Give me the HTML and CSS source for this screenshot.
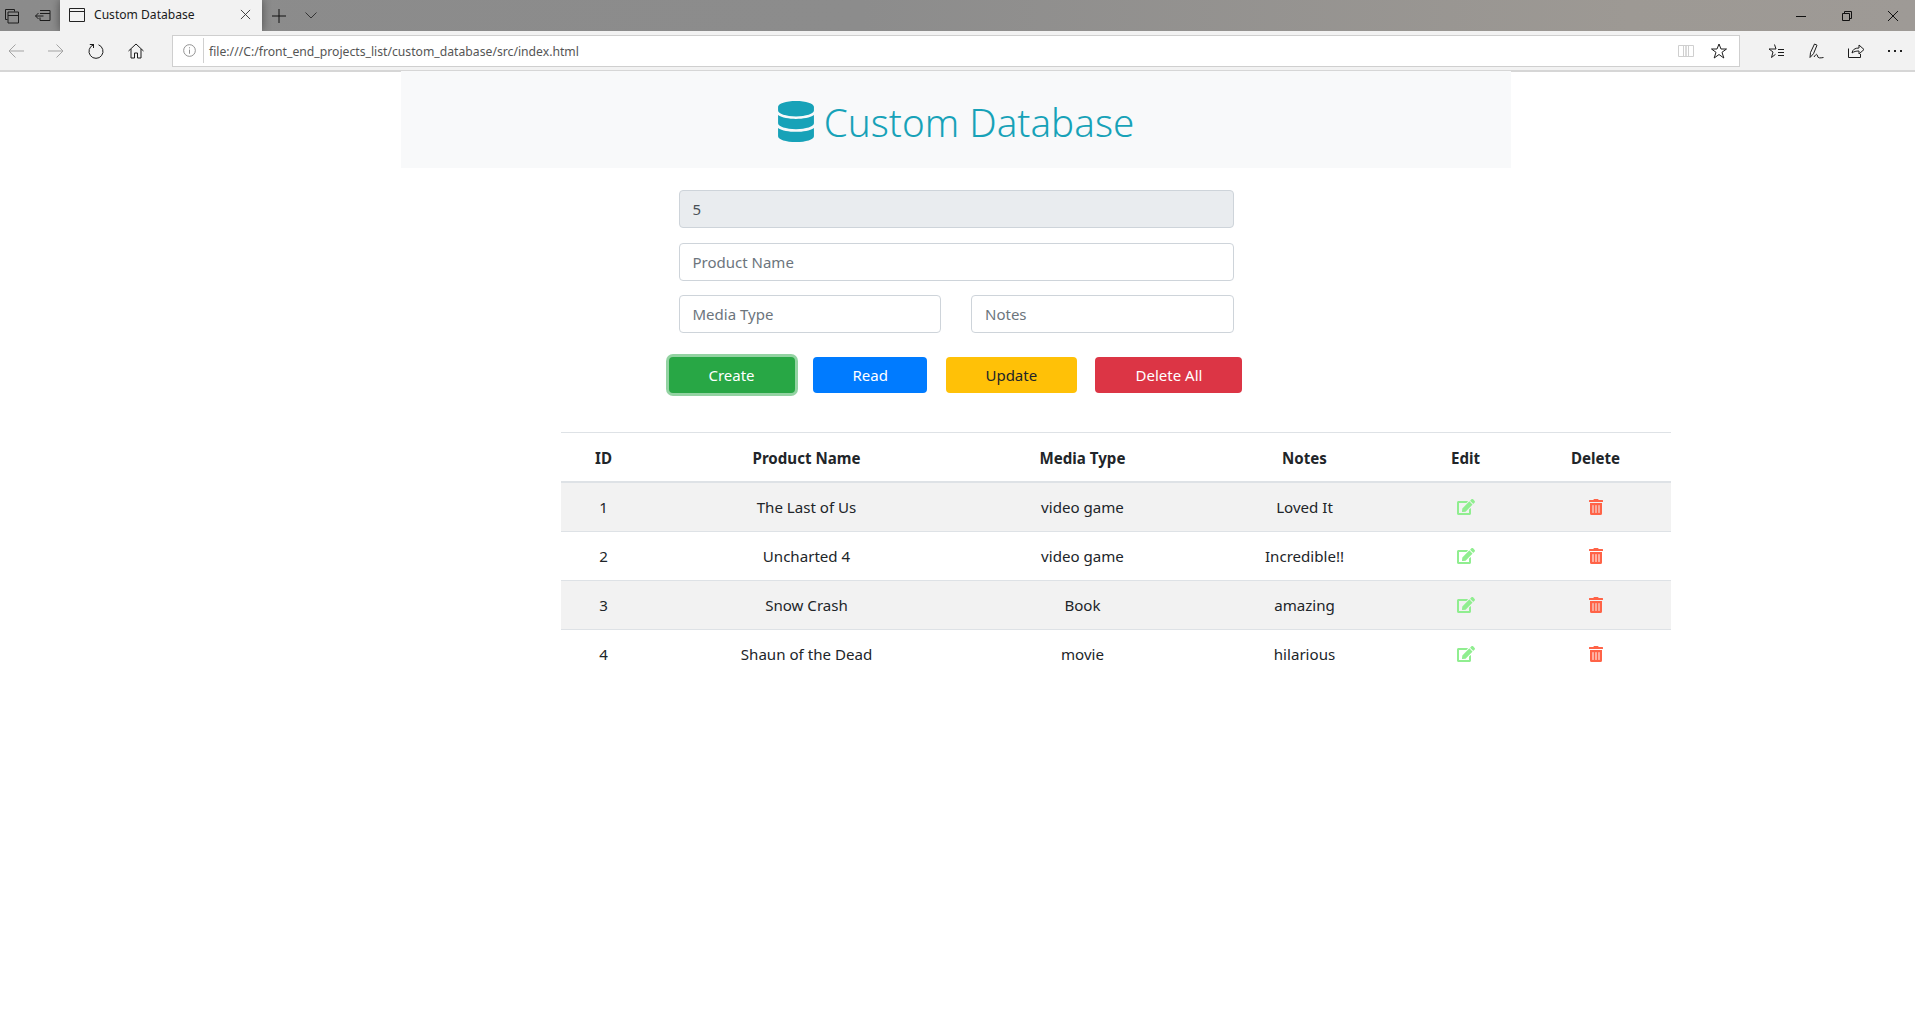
FILE: index.html
```html
<!DOCTYPE html>
<html lang="en">
<head>
<meta charset="utf-8">
<title>Custom Database</title>
<link rel="stylesheet" href="styles.css">
</head>
<body>
<header class="browser">
  <div class="titlebar">
    <div class="tab-tools">
      <svg class="ic" viewBox="0 0 16 16"><path d="M1.500 1.500h9v2M1.500 1.500v10h2M4 4h10.500v11H4zM4 7.500h10.500"/></svg>
      <svg class="ic ic-dark" viewBox="0 0 16 16"><path d="M5 2.500h10v10H5v-3M15 5.500H5M0.500 8h8M3.500 5l-3 3 3 3"/></svg>
    </div>
    <div class="tab">
      <svg class="tab-page" viewBox="0 0 16 14"><path d="M.5.500h15v13H.5zM.5 3.500h15"/></svg>
      <span class="tab-title">Custom Database</span>
      <svg class="tab-close" viewBox="0 0 12 12"><path d="M1 1l10 10M11 1L1 11"/></svg>
    </div>
    <svg class="new-tab" viewBox="0 0 14 14"><path d="M7 0v14M0 7h14"/></svg>
    <svg class="tab-list" viewBox="0 0 12 7"><path d="M.5.500L6 6l5.500-5.500"/></svg>
    <div class="win-controls">
      <svg class="win" viewBox="0 0 10 10"><path d="M0 5.500h10"/></svg>
      <svg class="win" viewBox="0 0 10 10"><path d="M.5 2.500h7v7h-7zM2.500 2.500v-2h7v7h-2"/></svg>
      <svg class="win" viewBox="0 0 10 10"><path d="M0 0l10 10M10 0L0 10"/></svg>
    </div>
  </div>
  <div class="toolbar">
    <div class="nav">
      <svg class="ic ic-off" viewBox="0 0 16 16"><path d="M16 8H1M7.500 1.500L1 8l6.500 6.500"/></svg>
      <svg class="ic ic-off" viewBox="0 0 16 16"><path d="M0 8h15M8.500 1.500L15 8l-6.500 6.500"/></svg>
      <svg class="ic" viewBox="0 0 16 16"><path d="M5.500 1.800a7 7 0 1 0 5 0M5.500 1v4M1.800 1.500H5.500"/></svg>
      <svg class="ic" viewBox="0 0 16 16"><path d="M.5 8L8 1l7.500 7M3 6v9h3.500v-5h3v5H13V6"/></svg>
    </div>
    <div class="address">
      <svg class="info" viewBox="0 0 14 14"><circle cx="7" cy="7" r="6.300"/><path d="M7 6v4.500M7 3.500v1.200"/></svg>
      <span class="url">file:///C:/front_end_projects_list/custom_database/src/index.html</span>
      <svg class="ic ic-faint" viewBox="0 0 16 16"><path d="M.5 2.500h7.500v11H.5zM8 2.500h7.500v11H8zM5.500 2.500v11M10.500 2.500v11"/></svg>
      <svg class="ic ic-star" viewBox="0 0 16 16"><path d="M8 1l2 5h5.500l-4.500 3.300 1.800 5.700L8 11.500 3.200 15 5 9.300.5 6H6z"/></svg>
    </div>
    <div class="actions">
      <svg class="ic" viewBox="0 0 16 16"><path d="M6.500 1.500L8 6H1l4 3-1.500 5.500 4-3.200M10 6.500h6M10 9.500h6M10 12.500h6"/></svg>
      <svg class="ic" viewBox="0 0 16 16"><path d="M2 14.500l.5-5L6.500 1l2.500 1.200-3.500 8.500-3.500 3.800zM6 14c2-3 3-3.500 3.500-1s2.500 2 6 1.500"/></svg>
      <svg class="ic" viewBox="0 0 16 16"><path d="M.5 5.500v9h12V11M4 10c.5-3.500 3-5 7-5V2l5 4.500-5 4.500V8c-3 0-5 .5-7 2z"/></svg>
      <div class="dots"><i></i><i></i><i></i></div>
    </div>
  </div>
</header>

<main class="page">
  <section class="jumbo">
    <svg class="db-icon" viewBox="0 0 448 512"><path d="M448 73.143v45.714C448 159.143 347.667 192 224 192S0 159.143 0 118.857V73.143C0 32.857 100.333 0 224 0s224 32.857 224 73.143zM448 176v102.857C448 319.143 347.667 352 224 352S0 319.143 0 278.857V176c48.125 33.143 136.208 48.572 224 48.572S399.874 209.143 448 176zm0 160v102.857C448 479.143 347.667 512 224 512S0 479.143 0 438.857V336c48.125 33.143 136.208 48.572 224 48.572S399.874 369.143 448 336z"/></svg>
    <h1 class="jumbo-title">Custom Database</h1>
  </section>

  <form class="entry">
    <input class="field field-locked" type="text" value="5" readonly>
    <input class="field" type="text" placeholder="Product Name">
    <div class="field-pair">
      <input class="field" type="text" placeholder="Media Type">
      <input class="field" type="text" placeholder="Notes">
    </div>
    <div class="buttons">
      <button class="btn btn-create" type="button">Create</button>
      <button class="btn btn-read" type="button">Read</button>
      <button class="btn btn-update" type="button">Update</button>
      <button class="btn btn-delete" type="button">Delete All</button>
    </div>
  </form>

  <table class="records">
    <colgroup>
      <col class="c-id"><col class="c-name"><col class="c-media"><col class="c-notes"><col class="c-edit"><col class="c-del">
    </colgroup>
    <thead>
      <tr><th>ID</th><th>Product Name</th><th>Media Type</th><th>Notes</th><th>Edit</th><th>Delete</th></tr>
    </thead>
    <tbody>
      <tr><td>1</td><td>The Last of Us</td><td>video game</td><td>Loved It</td>
        <td><svg class="edit" viewBox="0 0 576 512"><use href="#edit-shape"/></svg></td>
        <td><svg class="trash" viewBox="0 0 448 512"><use href="#trash-shape"/></svg></td></tr>
      <tr><td>2</td><td>Uncharted 4</td><td>video game</td><td>Incredible!!</td>
        <td><svg class="edit" viewBox="0 0 576 512"><use href="#edit-shape"/></svg></td>
        <td><svg class="trash" viewBox="0 0 448 512"><use href="#trash-shape"/></svg></td></tr>
      <tr><td>3</td><td>Snow Crash</td><td>Book</td><td>amazing</td>
        <td><svg class="edit" viewBox="0 0 576 512"><use href="#edit-shape"/></svg></td>
        <td><svg class="trash" viewBox="0 0 448 512"><use href="#trash-shape"/></svg></td></tr>
      <tr><td>4</td><td>Shaun of the Dead</td><td>movie</td><td>hilarious</td>
        <td><svg class="edit" viewBox="0 0 576 512"><use href="#edit-shape"/></svg></td>
        <td><svg class="trash" viewBox="0 0 448 512"><use href="#trash-shape"/></svg></td></tr>
    </tbody>
  </table>
</main>

<svg class="defs" aria-hidden="true">
  <defs>
    <path id="edit-shape" d="M402.600 83.200l90.200 90.200c3.800 3.800 3.800 10 0 13.800L274.400 405.600l-92.800 10.300c-12.400 1.400-22.900-9.100-21.500-21.500l10.300-92.800L388.800 83.200c3.800-3.800 10-3.800 13.800 0zm162-22.900l-48.800-48.800c-15.200-15.200-39.900-15.200-55.200 0l-35.400 35.400c-3.800 3.800-3.800 10 0 13.800l90.200 90.200c3.800 3.800 10 3.800 13.800 0l35.400-35.400c15.200-15.300 15.200-40 0-55.200zM384 346.200V448H64V128h229.800c3.200 0 6.200-1.300 8.500-3.500l40-40c7.600-7.600 2.200-20.500-8.500-20.500H48C21.500 64 0 85.500 0 112v352c0 26.500 21.500 48 48 48h352c26.500 0 48-21.500 48-48V306.200c0-10.700-12.900-16-20.500-8.500l-40 40c-2.200 2.300-3.500 5.300-3.500 8.500z"/>
    <path id="trash-shape" d="M32 464a48 48 0 0 0 48 48h288a48 48 0 0 0 48-48V128H32zm272-256a16 16 0 0 1 32 0v224a16 16 0 0 1-32 0zm-96 0a16 16 0 0 1 32 0v224a16 16 0 0 1-32 0zm-96 0a16 16 0 0 1 32 0v224a16 16 0 0 1-32 0zM432 32H312l-9.400-18.700A24 24 0 0 0 281.100 0H166.800a23.720 23.720 0 0 0-21.400 13.300L136 32H16A16 16 0 0 0 0 48v32a16 16 0 0 0 16 16h416a16 16 0 0 0 16-16V48a16 16 0 0 0-16-16z"/>
  </defs>
</svg>
</body>
</html>
```

FILE: styles.css
```css
* { box-sizing: border-box; }
html, body { margin: 0; padding: 0; background: #fff; }
body { font-family: "Noto Sans", "Open Sans", sans-serif; font-size: 16px; color: #212529; overflow: hidden; }

.defs { width: 0; height: 0; display: block; }

.browser { height: 71px; }
.titlebar {
  height: 31px;
  display: flex;
  align-items: center;
  overflow: hidden;
  background: linear-gradient(90deg, #8b8b8b 0%, #8c8c8c 45%, #9d9994 85%, #9e9a96 100%);
}
.tab-tools { display: flex; align-items: center; gap: 15px; width: 60px; padding-left: 4px; flex: none; }
.tab-tools .ic { width: 16px; height: 16px; }
.ic { width: 16px; height: 16px; fill: none; stroke: #1c1c1c; stroke-width: 1; flex: none; }
.ic-off { stroke: #a3a3a3; }
.ic-faint { stroke: #cfcfcf; }
.tab {
  width: 202px;
  height: 31px;
  background: #f2f2f2;
  display: flex;
  align-items: center;
  padding: 0 0 2px 9px;
  box-shadow: 0 0 10px rgba(0,0,0,.45);
  flex: none;
}
.tab-page { width: 16px; height: 14px; fill: none; stroke: #222; flex: none; }
.tab-title { font-size: 12.100px; color: #1a1a1a; margin: 0 0 1px 9px; width: 140px; white-space: nowrap; }
.tab-close { width: 11px; height: 11px; fill: none; stroke: #333; flex: none; margin-left: 6px; }
.new-tab { width: 14px; height: 14px; fill: none; stroke: #111; margin-left: 10px; flex: none; }
.tab-list { width: 12px; height: 7px; fill: none; stroke: #333; margin-left: 19px; flex: none; }
.win-controls { display: flex; gap: 36px; margin-left: auto; padding-right: 17px; }
.win { width: 10px; height: 10px; fill: none; stroke: #111; flex: none; }

.toolbar {
  height: 41px;
  background: #f2f2f2;
  border-bottom: 2px solid #d6d6d6;
  display: flex;
  align-items: center;
}
.nav { display: flex; align-items: center; gap: 24px; width: 172px; padding-left: 8px; flex: none; }
.address {
  width: 1568px;
  height: 32px;
  background: #fff;
  border: 1px solid #cfcfcf;
  display: flex;
  align-items: center;
  padding-left: 10px;
  flex: none;
}
.info { width: 13px; height: 13px; fill: none; stroke: #8a8a8a; flex: none; }
.url {
  font-size: 12.200px;
  color: #555;
  margin-left: 7px;
  padding: 2px 0 0 5px;
  border-left: 1px solid #d0d0d0;
  line-height: 23px;
  flex: 1;
  white-space: nowrap;
}
.ic-star { margin-left: 17px; margin-right: 12px; }
.actions { display: flex; align-items: center; gap: 24px; padding-left: 28px; }
.dots { display: flex; gap: 4px; width: 16px; }
.dots i { width: 2px; height: 2px; background: #222; display: block; }

.page { display: flex; flex-direction: column; align-items: center; padding-right: 3px; }
.jumbo {
  width: 1110px;
  height: 97px;
  background: #f8f9fa;
  display: flex;
  align-items: center;
  justify-content: center;
  gap: 10px;
}
.db-icon { width: 36px; height: 41px; fill: #17a2b8; flex: none; margin-top: 3px; }
.jumbo-title { margin: 5px 0 0; font-size: 38.600px; font-weight: 350; color: #17a2b8; line-height: 48px; }

.entry { width: 555px; margin-top: 22px; display: flex; flex-direction: column; gap: 15px; }
.field {
  display: block;
  width: 100%;
  height: 38px;
  padding: 6px 12px 6px 13px;
  font: inherit;
  font-size: 15px;
  color: #495057;
  background: #fff;
  border: 1px solid #ced4da;
  border-radius: 4px;
  outline: none;
}
.field::placeholder { color: #6c757d; opacity: 1; }
.field-locked { background: #e9ecef; }
.field-pair { display: flex; gap: 30px; margin-top: -1px; }
.buttons { display: flex; gap: 18.670px; margin: 9px -9px 0 -10px; }
.btn {
  font: inherit;
  font-size: 15px;
  line-height: 24px;
  height: 36px;
  padding: 6px 0;
  border: 0;
  border-radius: 4px;
  color: #fff;
  white-space: nowrap;
  text-align: center;
}
.btn-create { width: 126px; background: #28a745; box-shadow: 0 0 0 3px rgba(40,167,69,.5); }
.btn-read { width: 114px; background: #007bff; }
.btn-update { width: 131px; background: #ffc107; color: #212529; }
.btn-delete { width: 147px; background: #dc3545; }

.records {
  width: 1110px;
  margin: 39px 0 0 319px;
  border-collapse: collapse;
  table-layout: fixed;
  font-size: 15.100px;
  text-align: center;
}
.c-id { width: 84px; }
.c-name { width: 322px; }
.c-media { width: 230px; }
.c-notes { width: 214px; }
.c-edit { width: 108px; }
.c-del { width: 152px; }
.records th, .records td {
  padding: 12px 11px 12px 13px;
  line-height: 24px;
  border-top: 1px solid #dee2e6;
  vertical-align: top;
}
.records th { font-weight: 700; border-bottom: 2px solid #dee2e6; padding-top: 13px; padding-bottom: 11px; }
.records thead th { height: 49px; }
.records td { height: 49px; }
.records tbody tr:nth-child(odd) { background: #f2f2f2; }
.edit { width: 18px; height: 16px; fill: #90ee90; display: block; margin: 4px auto 0; }
.trash { width: 14px; height: 16px; fill: #ff6347; display: block; margin: 4px auto 0; }
```
